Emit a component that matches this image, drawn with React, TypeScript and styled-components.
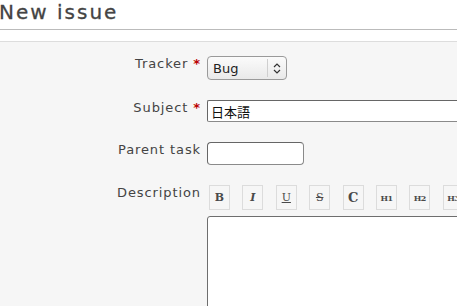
import styled, { createGlobalStyle } from 'styled-components';

const GlobalStyle = createGlobalStyle`
  html, body {
    margin: 0;
    padding: 0;
    background: #fff;
    overflow: hidden;
  }
  body {
    width: 457px;
    height: 306px;
    font-family: "DejaVu Sans", Verdana, sans-serif;
  }
`;

const toolbarItems = [
  { key: 'bold', label: 'B' },
  { key: 'italic', label: 'I' },
  { key: 'underline', label: 'U' },
  { key: 'strike', label: 'S' },
  { key: 'code', label: 'C' },
  { key: 'h1', label: 'H1' },
  { key: 'h2', label: 'H2' },
  { key: 'h3', label: 'H3' },
];

const App = () => {
  return (
    <>
      <GlobalStyle />
      <Page>
        <Title>New issue</Title>
        <FormBox>
          <Row>
            <Label>
              Tracker <Required>*</Required>
            </Label>
            <SelectBox>
              <span className="value">Bug</span>
              <span className="arrows">
                <svg width="8" height="11" viewBox="0 0 8 11">
                  <path
                    d="M1 4 L4 1 L7 4 M1 7 L4 10 L7 7"
                    fill="none"
                    stroke="#333"
                    strokeWidth="1.2"
                  />
                </svg>
              </span>
            </SelectBox>
          </Row>
          <Row>
            <Label>
              Subject <Required>*</Required>
            </Label>
            <TextInput $width={300} $height={22} $radius={2} defaultValue="日本語" />
          </Row>
          <Row>
            <Label>Parent task</Label>
            <TextInput $width={97} $height={23} $radius={4} />
          </Row>
          <Row>
            <Label>Description</Label>
            <Editor>
              <Toolbar>
                {toolbarItems.map((item) => (
                  <ToolButton key={item.key} $kind={item.key}>
                    {item.label}
                  </ToolButton>
                ))}
              </Toolbar>
              <TextArea />
            </Editor>
          </Row>
        </FormBox>
      </Page>
    </>
  );
};

const Page = styled.div`
  width: 620px;
`;

const Title = styled.h2`
  margin: 0 0 11px 0;
  padding: 0 0 5px 0;
  border-bottom: 1px solid #bbb;
  font-size: 20px;
  line-height: 24px;
  font-weight: normal;
  letter-spacing: 2px;
  color: #444;
  text-indent: -1px;
  -webkit-text-stroke: 0.3px #444;
`;

const FormBox = styled.div`
  display: flex;
  flex-direction: column;
  gap: 20px;
  background: #f6f6f6;
  border-top: 1px solid #ddd;
  padding-top: 14px;
  height: 300px;
`;

const Row = styled.div`
  display: grid;
  grid-template-columns: 200px 1fr;
  column-gap: 7px;
  align-items: start;
`;

const Label = styled.div`
  text-align: right;
  font-size: 13px;
  line-height: 16px;
  letter-spacing: 0.9px;
  color: #444;
  white-space: nowrap;
  margin-right: -1px;
`;

const Required = styled.span`
  color: #bb0000;
  font-weight: bold;
`;

const SelectBox = styled.div`
  box-sizing: border-box;
  display: flex;
  width: 80px;
  height: 24px;
  border: 1px solid #9a9a9a;
  border-radius: 4px;
  background: linear-gradient(#fbfbfb, #e9e9e9);
  font-size: 13px;
  color: #222;

  .value {
    flex: 1;
    padding-left: 5px;
    line-height: 23px;
  }

  .arrows {
    width: 18px;
    display: flex;
    align-items: center;
    justify-content: center;
    border-left: 1px solid #cfcfcf;
    margin: 2px 0;
  }
`;

const TextInput = styled.input<{ $width: number; $height: number; $radius: number }>`
  box-sizing: border-box;
  width: ${(p) => p.$width}px;
  height: ${(p) => p.$height}px;
  border: 1px solid #8a8a8a;
  border-top-color: #666;
  border-left-color: #666;
  border-radius: ${(p) => p.$radius}px;
  background: #fff;
  padding: 0 3px;
  font-size: 13px;
  font-family: "DejaVu Sans", "Noto Sans CJK JP", sans-serif;
  color: #111;
  outline: none;
`;

const Editor = styled.div`
  display: flex;
  flex-direction: column;
  gap: 6px;
  padding-left: 2px;
`;

const Toolbar = styled.div`
  display: flex;
  gap: 12.4px;
  height: 25px;
`;

const ToolButton = styled.span<{ $kind: string }>`
  box-sizing: border-box;
  display: flex;
  align-items: center;
  justify-content: center;
  width: 21px;
  height: 25px;
  border: 1px solid #dcdcdc;
  background: #f6f6f6;
  font-family: "DejaVu Serif", "Liberation Serif", serif;
  font-weight: bold;
  color: #4a4a4a;
  font-size: ${(p) => (p.$kind.startsWith('h') ? '8px' : p.$kind === 'code' ? '13px' : '11px')};
  font-style: ${(p) => (p.$kind === 'italic' ? 'italic' : 'normal')};
  font-weight: ${(p) => (p.$kind === 'underline' || p.$kind === 'strike' ? 'normal' : 'bold')};
  text-decoration: ${(p) =>
    p.$kind === 'underline' ? 'underline' : p.$kind === 'strike' ? 'line-through' : 'none'};
  letter-spacing: ${(p) => (p.$kind.startsWith('h') ? '-0.5px' : '0')};
`;

const TextArea = styled.div`
  box-sizing: border-box;
  margin-left: -2px;
  width: 400px;
  height: 120px;
  background: #fff;
  border: 1px solid #6e6e6e;
  border-radius: 3px 0 0 0;
`;

export default App;
